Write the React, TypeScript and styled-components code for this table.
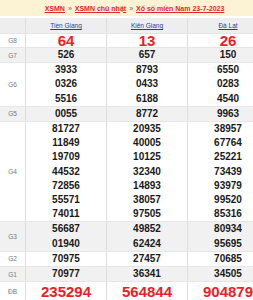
import React from "react";
import styled, { createGlobalStyle } from "styled-components";

const GlobalStyle = createGlobalStyle`
  html, body { margin: 0; padding: 0; background: #fff; }
  body { font-family: "Liberation Sans", Arial, sans-serif; overflow: hidden; }
`;

const provinces = ["Tiền Giang", "Kiên Giang", "Đà Lạt"];

type Prize = { label: string; big?: boolean; shaded?: boolean; lh: number; values: string[][] };

const prizes: Prize[] = [
  { label: "G8", big: true, lh: 13, values: [["64"], ["13"], ["26"]] },
  { label: "G7", shaded: true, lh: 14.2, values: [["526"], ["657"], ["150"]] },
  { label: "G6", lh: 14.2, values: [["3933", "0326", "5516"], ["8793", "0433", "6188"], ["6550", "0283", "4540"]] },
  { label: "G5", shaded: true, lh: 14.2, values: [["0055"], ["8772"], ["9963"]] },
  {
    label: "G4",
    lh: 14.2,
    values: [
      ["81727", "11849", "19709", "44532", "72856", "55571", "74011"],
      ["20935", "40005", "10125", "32340", "14893", "38057", "97505"],
      ["38957", "67764", "25221", "73439", "93979", "99520", "85316"],
    ],
  },
  { label: "G3", shaded: true, lh: 14.2, values: [["56687", "01940"], ["49852", "62424"], ["80934", "95695"]] },
  { label: "G2", lh: 14.2, values: [["70975"], ["27457"], ["70685"]] },
  { label: "G1", shaded: true, lh: 14.2, values: [["70977"], ["36341"], ["34505"]] },
  { label: "ĐB", big: true, lh: 19, values: [["235294"], ["564844"], ["904879"]] },
];

export default function App() {
  return (
    <Viewport>
      <GlobalStyle />
      <Sheet>
        <TitleBar>
          <Crumb>XSMN</Crumb>
          <Sep>»</Sep>
          <Crumb>XSMN chủ nhật</Crumb>
          <Sep>»</Sep>
          <Crumb>Xổ số miền Nam 23-7-2023</Crumb>
        </TitleBar>
        <Table>
          <HeadRow>
            <LabelCell />
            {provinces.map((p) => (
              <HeadCell key={p}>
                <Province>{p}</Province>
              </HeadCell>
            ))}
          </HeadRow>
          {prizes.map((row) => (
            <Row key={row.label} $shaded={row.shaded}>
              <LabelCell>{row.label}</LabelCell>
              {row.values.map((col, i) => (
                <NumCell key={i}>
                  {col.map((n, j) => (
                    <Num key={j} $big={row.big} $lh={row.lh}>
                      {n}
                    </Num>
                  ))}
                </NumCell>
              ))}
            </Row>
          ))}
        </Table>
      </Sheet>
    </Viewport>
  );
}

const Viewport = styled.div`
  width: 100%;
  overflow: hidden;
`;

const Sheet = styled.div`
  width: 269px;
`;

const TitleBar = styled.div`
  height: 16px;
  background: #fcf3d4;
  display: flex;
  align-items: center;
  justify-content: center;
  gap: 3px;
  margin-bottom: 2px;
  font-size: 7px;
  font-weight: bold;
`;

const Crumb = styled.a`
  color: #e3262d;
  text-decoration: underline;
`;

const Sep = styled.span`
  color: #666;
  font-weight: normal;
`;

const Table = styled.div`
  display: flex;
  flex-direction: column;
`;

const Row = styled.div<{ $shaded?: boolean }>`
  display: grid;
  grid-template-columns: 26px repeat(3, 81px);
  background: ${(p) => (p.$shaded ? "#f1f1f1" : "#fff")};
  border-top: 1px solid #e6e6e6;
`;

const HeadRow = styled(Row)`
  background: #eeeeee;
  border-top: none;
  height: 15px;
`;

const LabelCell = styled.div`
  display: flex;
  align-items: center;
  justify-content: center;
  font-size: 6.5px;
  color: #777;
  border-right: 1px solid #ddd;
`;

const HeadCell = styled.div`
  display: flex;
  align-items: center;
  justify-content: center;
  border-right: 1px solid #ddd;
`;

const Province = styled.a`
  font-size: 6.5px;
  color: #1a3fa8;
  text-decoration: underline;
`;

const NumCell = styled.div`
  display: flex;
  flex-direction: column;
  align-items: center;
  border-right: 1px solid #ddd;
`;

const Num = styled.div<{ $big?: boolean; $lh: number }>`
  font-weight: bold;
  font-size: ${(p) => (p.$big ? "15px" : "10px")};
  line-height: ${(p) => p.$lh}px;
  color: ${(p) => (p.$big ? "#ee1c25" : "#1a1a1a")};
`;
